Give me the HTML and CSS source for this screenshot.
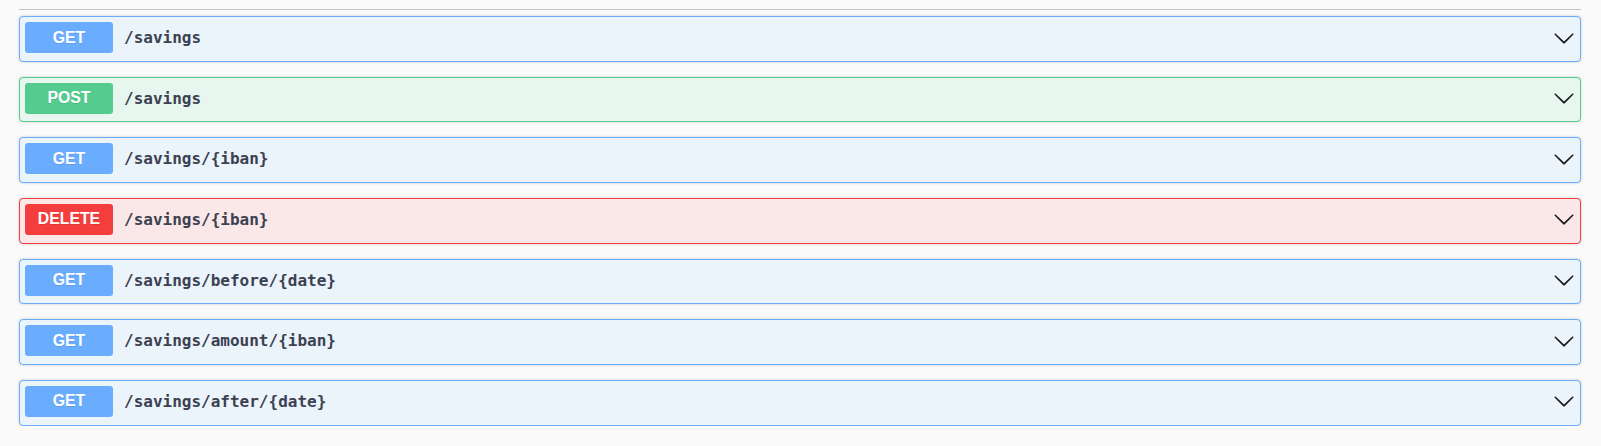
FILE: index.html
```html
<!DOCTYPE html>
<html lang="en">
<head>
<meta charset="utf-8">
<title>savings</title>
<link rel="stylesheet" href="styles.css">
</head>
<body>
<div class="wrapper">
  <div class="tag-line"></div>
  <div class="ops">
    <div class="opblock get">
      <span class="method">GET</span>
      <span class="path">/savings</span>
      <svg class="arrow" viewBox="0 0 20 20" width="22" height="22"><path d="M17.418 6.109c.272-.268.709-.268.979 0s.271.701 0 .969l-7.908 7.83c-.27.268-.707.268-.979 0l-7.908-7.830c-.27-.268-.27-.701 0-.969.271-.268.709-.268.979 0L10 13.25l7.418-7.141z"/></svg>
    </div>
    <div class="opblock post">
      <span class="method">POST</span>
      <span class="path">/savings</span>
      <svg class="arrow" viewBox="0 0 20 20" width="22" height="22"><path d="M17.418 6.109c.272-.268.709-.268.979 0s.271.701 0 .969l-7.908 7.83c-.27.268-.707.268-.979 0l-7.908-7.83c-.27-.268-.27-.701 0-.969.271-.268.709-.268.979 0L10 13.25l7.418-7.141z"/></svg>
    </div>
    <div class="opblock get">
      <span class="method">GET</span>
      <span class="path">/savings/{iban}</span>
      <svg class="arrow" viewBox="0 0 20 20" width="22" height="22"><path d="M17.418 6.109c.272-.268.709-.268.979 0s.271.701 0 .969l-7.908 7.83c-.27.268-.707.268-.979 0l-7.908-7.83c-.27-.268-.27-.701 0-.969.271-.268.709-.268.979 0L10 13.25l7.418-7.141z"/></svg>
    </div>
    <div class="opblock delete">
      <span class="method">DELETE</span>
      <span class="path">/savings/{iban}</span>
      <svg class="arrow" viewBox="0 0 20 20" width="22" height="22"><path d="M17.418 6.109c.272-.268.709-.268.979 0s.271.701 0 .969l-7.908 7.83c-.27.268-.707.268-.979 0l-7.908-7.83c-.27-.268-.27-.701 0-.969.271-.268.709-.268.979 0L10 13.25l7.418-7.141z"/></svg>
    </div>
    <div class="opblock get">
      <span class="method">GET</span>
      <span class="path">/savings/before/{date}</span>
      <svg class="arrow" viewBox="0 0 20 20" width="22" height="22"><path d="M17.418 6.109c.272-.268.709-.268.979 0s.271.701 0 .969l-7.908 7.83c-.27.268-.707.268-.979 0l-7.908-7.83c-.27-.268-.27-.701 0-.969.271-.268.709-.268.979 0L10 13.25l7.418-7.141z"/></svg>
    </div>
    <div class="opblock get">
      <span class="method">GET</span>
      <span class="path">/savings/amount/{iban}</span>
      <svg class="arrow" viewBox="0 0 20 20" width="22" height="22"><path d="M17.418 6.109c.272-.268.709-.268.979 0s.271.701 0 .969l-7.908 7.83c-.27.268-.707.268-.979 0l-7.908-7.83c-.27-.268-.27-.701 0-.969.271-.268.709-.268.979 0L10 13.25l7.418-7.141z"/></svg>
    </div>
    <div class="opblock get">
      <span class="method">GET</span>
      <span class="path">/savings/after/{date}</span>
      <svg class="arrow" viewBox="0 0 20 20" width="22" height="22"><path d="M17.418 6.109c.272-.268.709-.268.979 0s.271.701 0 .969l-7.908 7.83c-.27.268-.707.268-.979 0l-7.908-7.83c-.27-.268-.27-.701 0-.969.271-.268.709-.268.979 0L10 13.25l7.418-7.141z"/></svg>
    </div>
  </div>
</div>
</body>
</html>
```

FILE: styles.css
```css
html, body {
  margin: 0;
  padding: 0;
  background: #fafafa;
}

.wrapper {
  padding: 9px 20px 0 19px;
}

.tag-line {
  height: 1px;
  background: rgba(59, 65, 81, 0.3);
}

.ops {
  display: flex;
  flex-direction: column;
  gap: 15px;
  padding-top: 6px;
}

.opblock {
  display: flex;
  align-items: center;
  height: 45.67px;
  box-sizing: border-box;
  padding: 5px 5px 7.67px 5px;
  border: 1px solid #61affe;
  border-radius: 4px;
  box-shadow: 0 0 3px rgba(0, 0, 0, 0.19);
}

.opblock.get {
  border-color: #6aadfe;
  background: #ebf3fb;
}
.opblock.post {
  border-color: #55cb8f;
  background: #e8f6f0;
}
.opblock.delete {
  border-color: #f43e3e;
  background: #fae7e7;
}

.method {
  width: 88px;
  height: 31px;
  flex: none;
  display: flex;
  align-items: center;
  justify-content: center;
  border-radius: 3px;
  color: #fff;
  font-family: "Liberation Sans", Arial, sans-serif;
  font-weight: 700;
  font-size: 15.8px;
  text-shadow: 0 1px 0 rgba(0, 0, 0, 0.1);
}

.get .method { background: #6aadfe; }
.post .method { background: #55cb8f; }
.delete .method { background: #f43e3e; }

.path {
  flex: 1;
  padding-left: 11px;
  font-family: "DejaVu Sans Mono", "Liberation Mono", monospace;
  font-weight: 700;
  font-size: 16px;
  color: #3b4151;
}

.arrow {
  flex: none;
  fill: #1a1a1a;
}
```
